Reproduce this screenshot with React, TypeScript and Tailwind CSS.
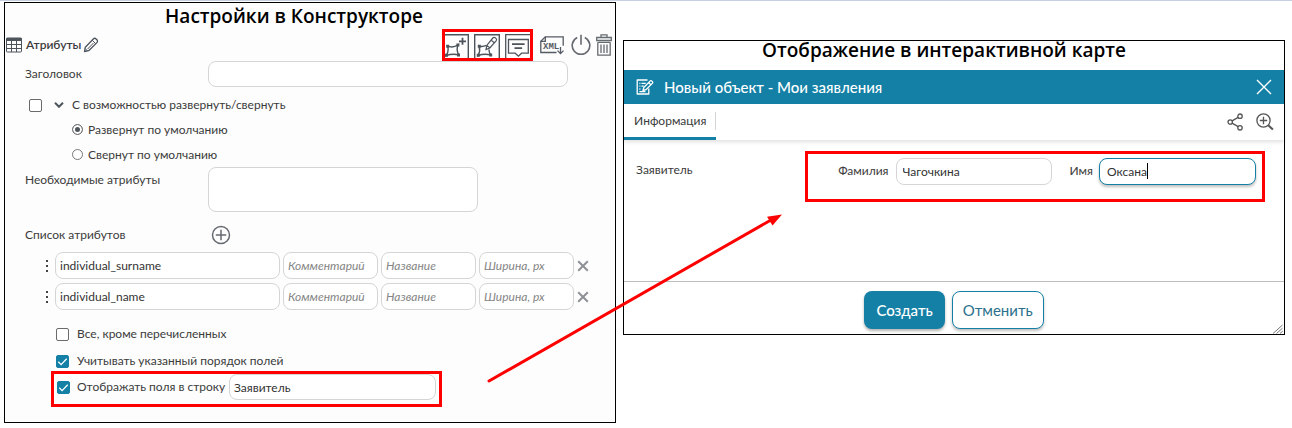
import React, { useState } from "react";

type IconProps = { className?: string };

const fieldClass =
  "min-w-0 rounded-lg border border-[#d5d5d5] bg-white text-xs text-[#333] outline-none placeholder:italic placeholder:text-[#858585]";

function TableIcon({ className }: IconProps) {
  return (
    <svg className={className} viewBox="0 0 16 16" fill="none" stroke="#4d545c">
      <rect x="0.5" y="1" width="15" height="14" rx="0.8" />
      <path d="M0.5 1.5h15v2h-15z" fill="#4d545c" />
      <path d="M0.5 7.5h15M0.5 11.5h15M5.5 3v12M10.5 3v12" />
    </svg>
  );
}

function PencilIcon({ className }: IconProps) {
  return (
    <svg className={className} viewBox="0 0 16 16" fill="none" stroke="#4d545c" strokeWidth="1.3" strokeLinejoin="round">
      <path d="M1.5 14.5l.8-4.3 8-8.2c.8-.8 2-.8 2.8 0l.8.8c.8.8.8 2 0 2.8l-8.2 8.1z" />
      <path d="M9.2 3.2l3.6 3.6M4.6 12l5.8-5.9M2 11.4l2.6 2.6" strokeWidth="1" />
    </svg>
  );
}

function PolygonAddIcon({ className }: IconProps) {
  return (
    <svg className={className} viewBox="0 0 24 24" fill="none" stroke="#4d545c" strokeWidth="1.4">
      <path d="M0 .7h23.3V24" />
      <path d="M2.6 12.2c3.4 1.2 7 1 10.4-1.2-1.4 3.5-1.2 6.5.7 9.8-4.2-.8-8-.8-12.4.7 2-3.3 2.3-6.3 1.3-9.3z" />
      <path d="M1.2 10.8h3v3h-3zM11.4 9.6h3v3h-3zM0 19.8h3v3H0zM12 19.4h3v3h-3z" fill="#4d545c" stroke="none" />
      <path d="M17.5 3.8v7M14 7.3h7" strokeWidth="1.8" />
    </svg>
  );
}

function PolygonEditIcon({ className }: IconProps) {
  return (
    <svg className={className} viewBox="0 0 26 24" fill="none" stroke="#4d545c" strokeWidth="1.4">
      <path d="M.7 24V.7h24.6V24" />
      <path d="M12.5 11.4c-2.6 1.2-5 1.3-7.3.8 1 3.3.5 6.3-1 9.3 4-1.5 8.3-1.5 12.4-.7-1.2-1.8-1.7-3.4-1.6-5.4" />
      <path d="M3.8 10.8h3v3h-3zM2.8 19.8h3v3h-3zM15.2 19.4h3v3h-3z" fill="#4d545c" stroke="none" />
      <path
        d="M12 15.6l.8-4.2 6-7.4c.8-.9 1.6-.9 2.4-.3l.8.7c.8.7.8 1.5.1 2.4l-6.3 7.2zM17 6l3.3 2.8M12.8 11.4l3.2 2.6"
        fill="#fff"
        strokeWidth="1.2"
      />
    </svg>
  );
}

function CommentIcon({ className }: IconProps) {
  return (
    <svg className={className} viewBox="0 0 25 24" fill="none" stroke="#4d545c" strokeWidth="1.3">
      <path d="M.7 24V.7H25" />
      <path d="M3.5 5.5h19.8v13.7h-6.7l-3.2 3-3.2-3H3.5z" />
      <path d="M7 10.2h12.6M9.5 14.2h7.6" strokeWidth="1.7" />
    </svg>
  );
}

function XmlIcon({ className }: IconProps) {
  return (
    <svg className={className} viewBox="0 0 24 20" fill="none" stroke="#555b62" strokeWidth="1.3">
      <path d="M16.5 17.5H.8V6.2L5.3 1.8h17.9v9" />
      <path d="M.8 6.3h4.5V1.8" />
      <text x="3" y="14" fontSize="9" fontWeight="700" fontFamily="Liberation Mono, monospace" fill="#555b62" stroke="none">
        XML
      </text>
      <path d="M20.5 12v6.5M17.5 15.6l3 3 3-3" />
    </svg>
  );
}

function PowerIcon({ className }: IconProps) {
  return (
    <svg className={className} viewBox="0 0 20 22" fill="none" stroke="#666b71" strokeWidth="1.6">
      <path d="M10 .8v10M6.2 3.5a8.8 8.8 0 1 0 7.6 0" />
    </svg>
  );
}

function TrashIcon({ className }: IconProps) {
  return (
    <svg className={className} viewBox="0 0 16 22" fill="none" stroke="#666b71" strokeWidth="1.3">
      <path d="M5 3.2V.9h6v2.3M.7 3.5h14.6v3H.7z" />
      <path d="M1.8 8.3v12.9h12.4V8.3M1.8 8.3h12.4M5 10.5v8.5M8 10.5v8.5M11 10.5v8.5" />
    </svg>
  );
}

function PlusCircleIcon({ className }: IconProps) {
  return (
    <svg className={className} viewBox="0 0 20 20" fill="none" stroke="#666b71" strokeWidth="1.5">
      <circle cx="10" cy="10" r="8.5" />
      <path d="M10 4.8v10.4M4.8 10h10.4" />
    </svg>
  );
}

function FormIcon({ className }: IconProps) {
  return (
    <svg className={className} viewBox="0 0 18 16" fill="none" stroke="#fff" strokeWidth="1.3" strokeLinejoin="round">
      <path d="M11.5 1H1.2v14h11.6V9.5" />
      <path d="M3.4 4.3h1M5.5 4.3h4.2M3.4 7.2h1M5.5 7.2h2.2M3.4 10h1M3.4 12.6h6" />
      <path d="M7 11.5l.8-3 6.2-6.4c.6-.6 1.3-.6 1.9 0l.4.4c.6.6.6 1.3 0 1.9L10 10.7zM12.6 3.5l2.3 2.3" />
    </svg>
  );
}

function ShareIcon({ className }: IconProps) {
  return (
    <svg className={className} viewBox="0 0 17 18" fill="none" stroke="#555" strokeWidth="1.3">
      <circle cx="3.2" cy="9" r="2.2" />
      <circle cx="13" cy="3.2" r="2.2" />
      <circle cx="13" cy="14.8" r="2.2" />
      <path d="M5.1 7.9l6-3.5M5.1 10.1l6 3.5" />
    </svg>
  );
}

function ZoomInIcon({ className }: IconProps) {
  return (
    <svg className={className} viewBox="0 0 18 18" fill="none" stroke="#555" strokeWidth="1.3">
      <circle cx="7.5" cy="7.5" r="6.6" />
      <path d="M7.5 3.8v7.4M3.8 7.5h7.4" />
      <path d="M12.3 12.3l4.6 4.3" strokeWidth="2" />
    </svg>
  );
}

function CheckBox(props: { id: string; checked: boolean; onChange: (v: boolean) => void }) {
  return (
    <span className="relative grid size-[13px] shrink-0 place-items-center">
      <input
        id={props.id}
        type="checkbox"
        checked={props.checked}
        onChange={(e) => props.onChange(e.target.checked)}
        className="size-[13px] appearance-none rounded-xs border border-[#6b6b6b] bg-white checked:border-[#1580a6] checked:bg-[#1580a6]"
      />
      {props.checked && (
        <svg className="pointer-events-none absolute inset-0" viewBox="0 0 13 13" fill="none" stroke="#fff" strokeWidth="1.3">
          <path d="M2.3 6.8l2.8 2.8 5.6-5.8" />
        </svg>
      )}
    </span>
  );
}

function Radio(props: { id: string; label: string; checked: boolean; onChange: () => void }) {
  return (
    <div className="flex h-[25px] items-center gap-[5px]">
      <input
        id={props.id}
        type="radio"
        name="collapse"
        checked={props.checked}
        onChange={props.onChange}
        className="size-[11px] appearance-none rounded-full border border-[#777] bg-white checked:bg-[#4d545c] checked:shadow-[inset_0_0_0_2px_#fff]"
      />
      <label htmlFor={props.id}>{props.label}</label>
    </div>
  );
}

function AttributeRow({ name }: { name: string }) {
  const [value, setValue] = useState(name);

  return (
    <li className="flex items-center gap-[3px]">
      <span className="mr-[3px] flex w-1 flex-col items-center gap-[3px]">
        <i className="size-[2px] bg-[#444]" />
        <i className="size-[2px] bg-[#444]" />
        <i className="size-[2px] bg-[#444]" />
      </span>
      <input
        aria-label="Атрибут"
        value={value}
        onChange={(e) => setValue(e.target.value)}
        className={`${fieldClass} h-[27px] w-[225px] px-1`}
      />
      <input aria-label="Комментарий" placeholder="Комментарий" className={`${fieldClass} h-[27px] w-[95px] px-1`} />
      <input aria-label="Название" placeholder="Название" className={`${fieldClass} h-[27px] w-[95px] px-1`} />
      <input aria-label="Ширина, px" placeholder="Ширина, px" className={`${fieldClass} h-[27px] w-[95px] px-1`} />
      <button aria-label="Удалить">
        <svg className="size-3" viewBox="0 0 12 12" fill="none" stroke="#8d9196" strokeWidth="2">
          <path d="M1.2 1.2l9.6 9.6M10.8 1.2l-9.6 9.6" />
        </svg>
      </button>
    </li>
  );
}

function SettingsPanel() {
  const [collapsible, setCollapsible] = useState(false);
  const [expanded, setExpanded] = useState(true);
  const [except, setExcept] = useState(false);
  const [ordered, setOrdered] = useState(true);
  const [inline, setInline] = useState(true);
  const [group, setGroup] = useState("Заявитель");

  return (
    <section className="mt-px min-w-0 flex-[612] border border-black bg-[#fdfdfd] pb-[15px]">
      <h2 className="flex h-[26px] items-center justify-center pr-8 font-['Open_Sans',sans-serif] text-[19px] leading-[18px] font-semibold text-black">
        Настройки в Конструкторе
      </h2>

      <div className="flex h-8 items-center pr-[3px]">
        <TableIcon className="ml-px size-4" />
        <h3 className="ml-1 font-semibold">Атрибуты</h3>
        <button aria-label="Переименовать" className="ml-[2px]">
          <PencilIcon className="size-4" />
        </button>

        <div className="ml-auto flex h-8 items-end gap-[5px] border-3 border-[#fe0000]">
          <button aria-label="Добавить геометрию"><PolygonAddIcon className="h-6 w-6" /></button>
          <button aria-label="Изменить геометрию"><PolygonEditIcon className="h-6 w-[26px]" /></button>
          <button aria-label="Комментарий"><CommentIcon className="h-6 w-[25px]" /></button>
        </div>
        <button aria-label="XML" className="ml-[7px]"><XmlIcon className="h-5 w-6" /></button>
        <button aria-label="Отключить" className="ml-[7px]"><PowerIcon className="h-[22px] w-5" /></button>
        <button aria-label="Удалить" className="ml-[5px]"><TrashIcon className="h-[22px] w-4" /></button>
      </div>

      <div className="flex items-center pl-5">
        <label htmlFor="title" className="w-[183px]">Заголовок</label>
        <input id="title" className={`${fieldClass} h-[26px] w-[360px] px-2`} />
      </div>

      <div className="mt-[6px] flex h-6 items-center pl-6">
        <CheckBox id="collapsible" checked={collapsible} onChange={setCollapsible} />
        <svg className="ml-3 h-[6px] w-[10px]" viewBox="0 0 10 6" fill="none" stroke="#4d545c" strokeWidth="2">
          <path d="M1 .8l4 4 4-4" />
        </svg>
        <label htmlFor="collapsible" className="ml-2">С возможностью развернуть/свернуть</label>
      </div>
      <div className="pl-[67px]">
        <Radio id="expanded" label="Развернут по умолчанию" checked={expanded} onChange={() => setExpanded(true)} />
        <Radio id="collapsed" label="Свернут по умолчанию" checked={!expanded} onChange={() => setExpanded(false)} />
      </div>

      <div className="flex items-start pl-5">
        <label htmlFor="required" className="mt-1 w-[183px]">Необходимые атрибуты</label>
        <textarea id="required" className={`${fieldClass} h-[45px] w-[270px] resize-none px-2`} />
      </div>

      <div className="mt-[10px] flex h-[26px] items-center pl-5">
        <span className="w-[186px]">Список атрибутов</span>
        <button aria-label="Добавить атрибут"><PlusCircleIcon className="size-5" /></button>
      </div>

      <ul className="mt-1 flex flex-col gap-1 pl-10">
        <AttributeRow name="individual_surname" />
        <AttributeRow name="individual_name" />
      </ul>

      <div className="mt-[14px] flex flex-col gap-[7px] pl-[51px]">
        <div className="flex h-5 items-center gap-2">
          <CheckBox id="except" checked={except} onChange={setExcept} />
          <label htmlFor="except">Все, кроме перечисленных</label>
        </div>
        <div className="flex h-5 items-center gap-2">
          <CheckBox id="ordered" checked={ordered} onChange={setOrdered} />
          <label htmlFor="ordered">Учитывать указанный порядок полей</label>
        </div>
      </div>

      <div className="ml-[46px] flex h-9 w-[391px] items-start border-3 border-[#fe0000] px-[3px]">
        <div className="flex h-[26px] items-center gap-[7px]">
          <CheckBox id="inline" checked={inline} onChange={setInline} />
          <label htmlFor="inline" className="whitespace-nowrap">Отображать поля в строку</label>
        </div>
        <input
          aria-label="Название строки"
          value={group}
          onChange={(e) => setGroup(e.target.value)}
          className={`${fieldClass} ml-auto h-[26px] w-[207px] px-1`}
        />
      </div>
    </section>
  );
}

function MapPanel() {
  const [surname, setSurname] = useState("Чагочкина");
  const [name, setName] = useState("Оксана");

  return (
    <section className="mt-[39px] min-w-0 flex-[662] border border-black bg-white">
      <h2 className="flex h-[29px] items-start justify-center pr-5 font-['Open_Sans',sans-serif] text-[19px] leading-[18px] font-semibold text-black">
        Отображение в интерактивной карте
      </h2>

      <header className="flex h-[34px] items-center bg-[#1580a6] px-3 text-white">
        <FormIcon className="h-4 w-[18px]" />
        <h3 className="ml-[10px] text-[15px] font-medium">Новый объект - Мои заявления</h3>
        <button aria-label="Закрыть" className="ml-auto">
          <svg className="size-4" viewBox="0 0 16 16" fill="none" stroke="#fff" strokeWidth="1.4">
            <path d="M1 1l14 14M15 1L1 15" />
          </svg>
        </button>
      </header>

      <nav className="flex h-9 items-center pr-[10px] shadow-[0_2px_4px_rgba(0,0,0,0.12)]">
        <a href="#info" className="flex h-9 w-[92px] items-center justify-between border-b-3 border-[#1580a6] pl-[10px]">
          Информация
          <span className="h-[18px] w-px bg-[#d5d5d5]" />
        </a>
        <button aria-label="Поделиться" className="ml-auto"><ShareIcon className="h-[18px] w-[17px]" /></button>
        <button aria-label="Приблизить" className="ml-3"><ZoomInIcon className="size-[18px]" /></button>
      </nav>

      <div className="flex h-[141px] items-start justify-between pt-[11px] pr-[19px] pl-3">
        <span className="mt-[10px]">Заявитель</span>
        <div className="flex h-[51px] w-[460px] items-start border-3 border-[#fe0000] pt-1 pr-[6px]">
          <label htmlFor="surname" className="mt-1 ml-auto">Фамилия</label>
          <input
            id="surname"
            value={surname}
            onChange={(e) => setSurname(e.target.value)}
            className={`${fieldClass} ml-[7px] h-[27px] w-[156px] px-[6px]`}
          />
          <label htmlFor="name" className="mt-1 ml-[18px]">Имя</label>
          <div className="relative ml-[6px]">
            <input
              id="name"
              value={name}
              onChange={(e) => setName(e.target.value)}
              className="h-[27px] w-[157px] rounded-lg border border-[#1580a6] bg-white px-[7px] text-xs text-[#333] shadow-[0_2px_3px_rgba(0,0,0,0.25)] outline-none"
            />
            {/* text cursor */}
            <span className="absolute top-[5px] left-12 h-4 w-px bg-black" />
          </div>
        </div>
      </div>

      <footer className="relative flex h-[53px] items-start justify-center gap-[7px] border-t border-[#b9bdbd] pt-[9px] text-[15px]">
        <button className="h-[38px] rounded-lg bg-[#1580a6] px-3 font-medium text-white shadow-[0_2px_3px_rgba(0,0,0,0.3)]">
          Создать
        </button>
        <button className="h-[38px] rounded-lg border border-[#1580a6] bg-white px-[10px] text-[#2c718c] shadow-[0_2px_3px_rgba(0,0,0,0.25)]">
          Отменить
        </button>
        <svg className="absolute right-0 bottom-0 size-3" viewBox="0 0 12 12" stroke="#777" strokeWidth="1">
          <path d="M1 11.5L10.5 3M4.5 11.5l6-5.3M8 11.5l2.8-2.4" />
        </svg>
      </footer>
    </section>
  );
}

export default function App() {
  return (
    <main className="relative border-t border-[#c6cfe4] bg-white font-['Lato','Noto_Sans',sans-serif] text-xs leading-[18px] text-[#3b3b3b]">
      <div className="flex items-start gap-[7px] pr-[7px] pb-1 pl-1">
        <SettingsPanel />
        <MapPanel />
      </div>

      {/* arrow from the option to the fields it produces */}
      <svg className="pointer-events-none absolute top-[212px] left-[487px] h-[172px] w-[296px]" viewBox="0 0 296 172">
        <path d="M2 168L284 7" stroke="#fe0000" strokeWidth="3" strokeLinecap="round" />
        <path d="M295 1.5L285.5 12.5L280 3.8z" fill="#fe0000" />
      </svg>
    </main>
  );
}
